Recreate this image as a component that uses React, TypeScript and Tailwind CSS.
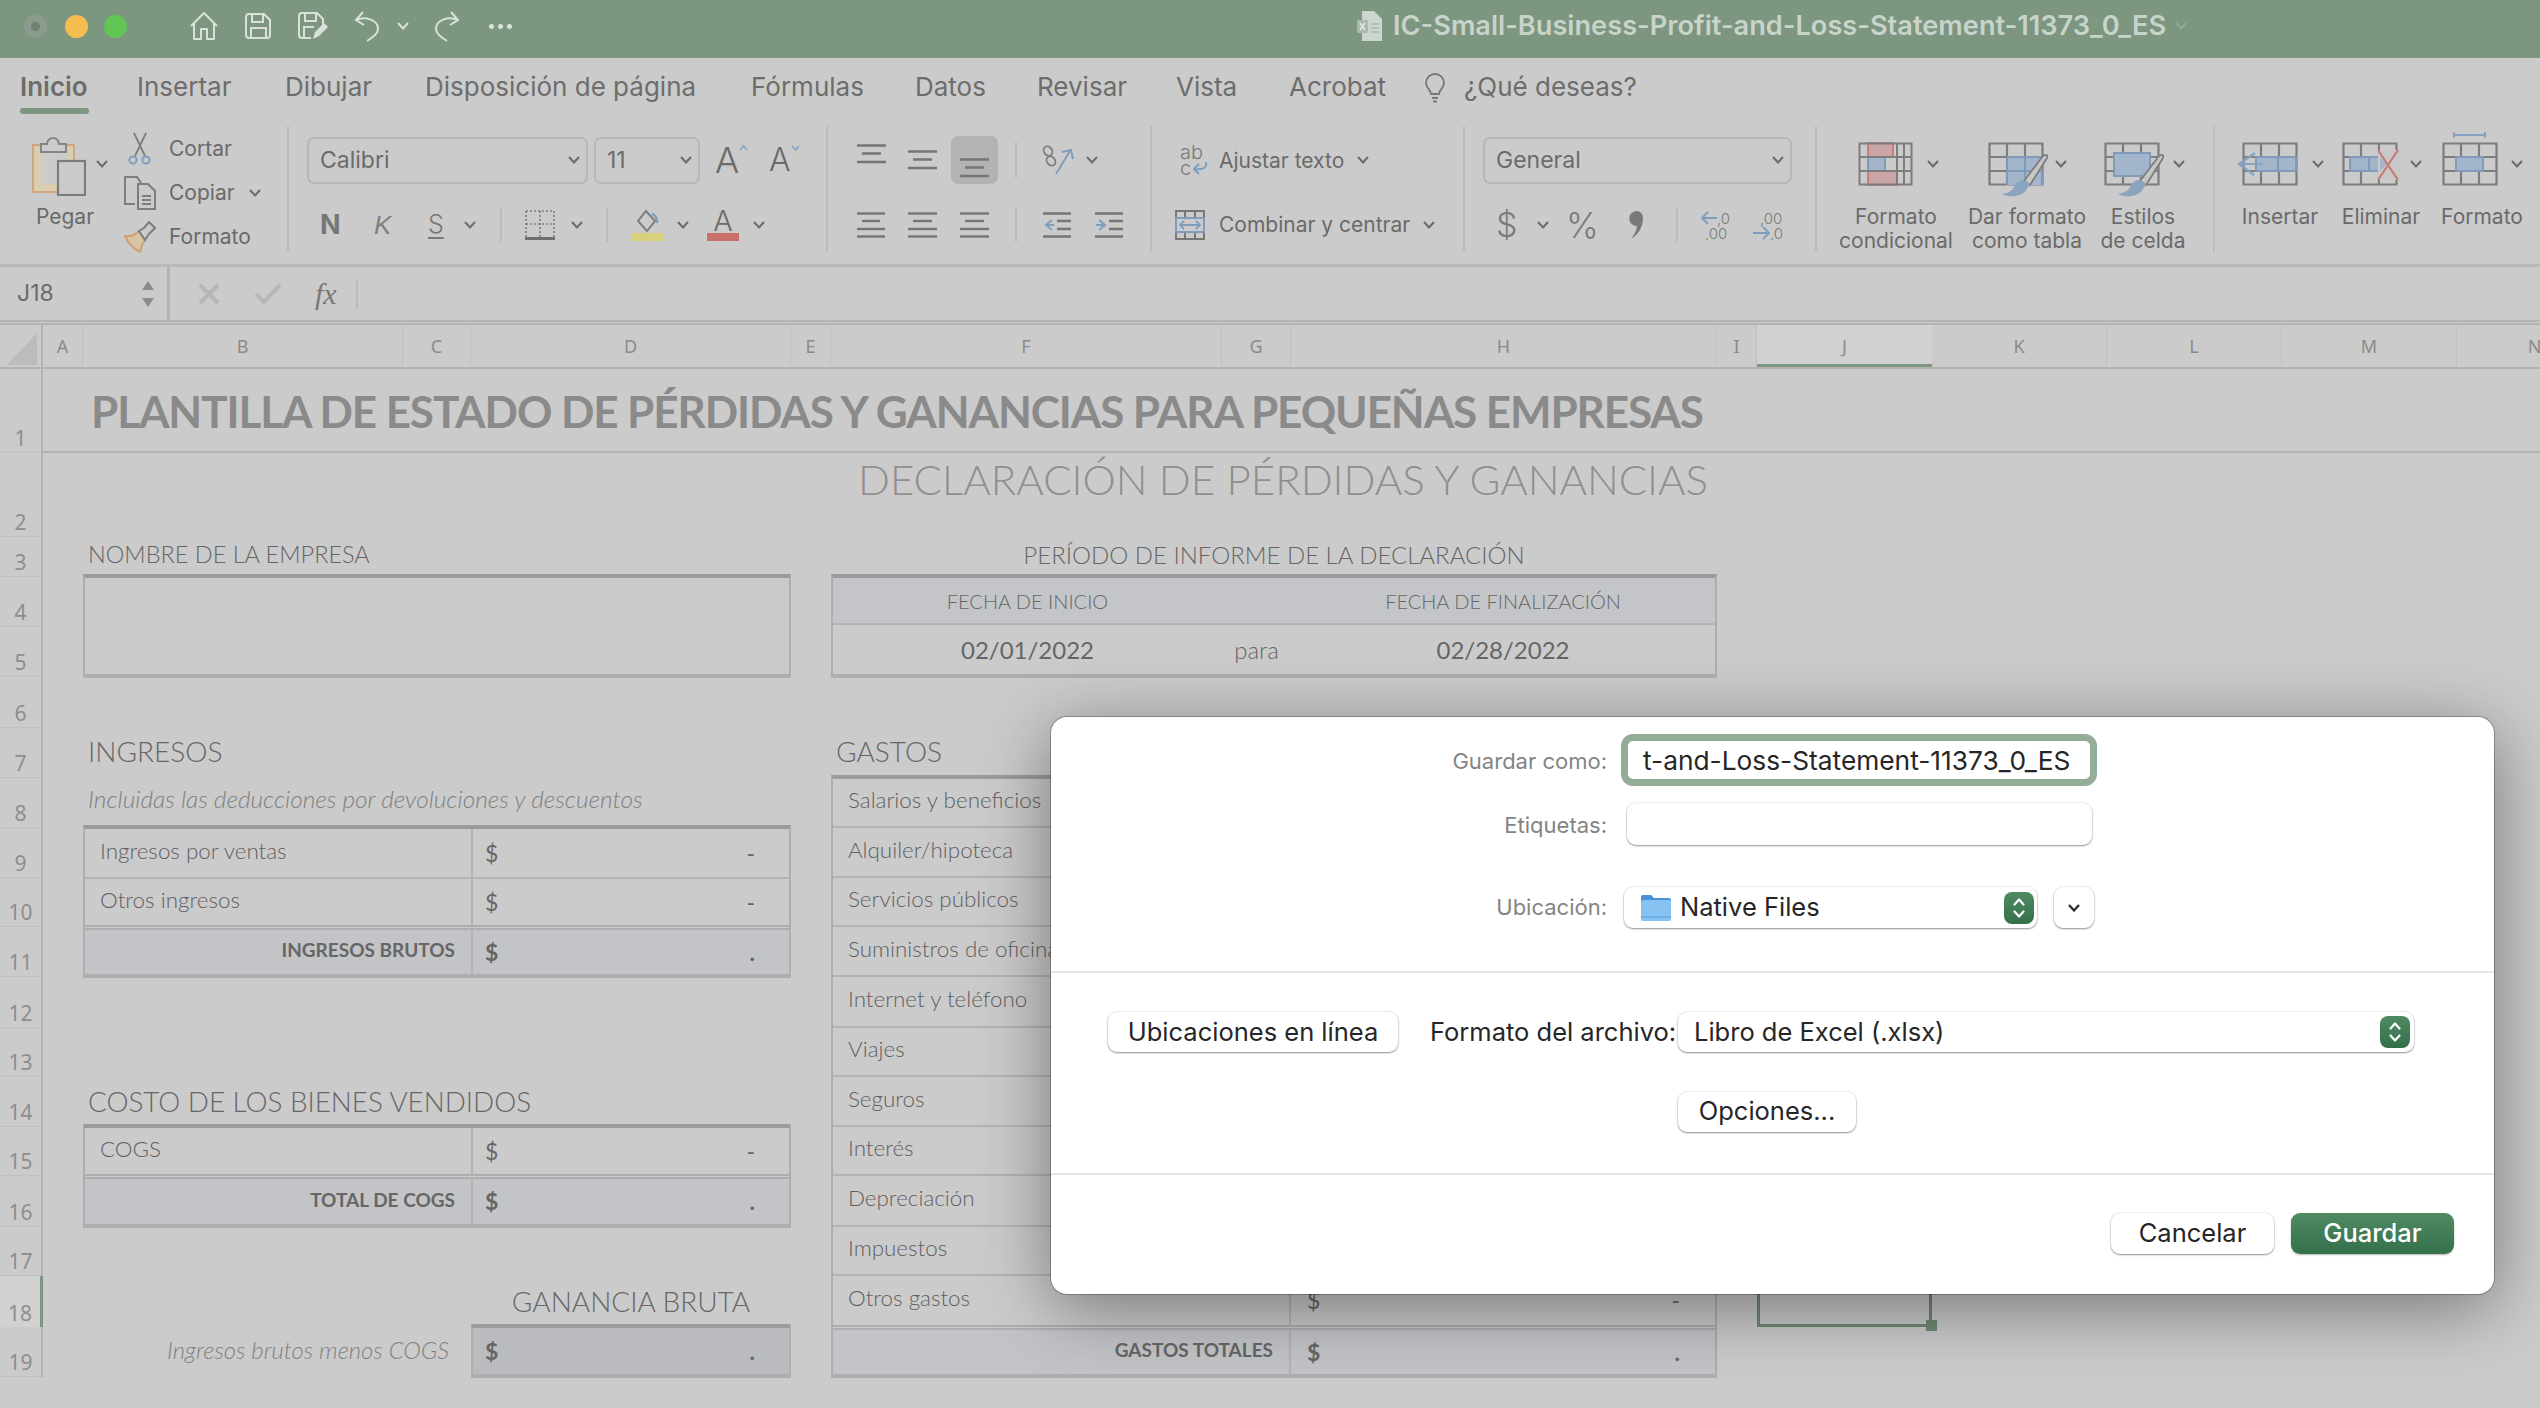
const Chev = ({ className = "" }: { className?: string }) => (
  <svg width="12" height="8" viewBox="0 0 12 8" fill="none" stroke="#6b6b6b" strokeWidth="2" className={`shrink-0 ${className}`}>
    <path d="M1 1l5 5.5L11 1" />
  </svg>
);

const Sep = ({ className = "" }: { className?: string }) => <div className={`w-[2px] shrink-0 bg-[#bcbcbc] ${className}`} />;

const Combo = ({ label, className = "" }: { label: string; className?: string }) => (
  <div className={`flex h-[47px] shrink-0 items-center justify-between rounded-[7px] border-2 border-[#b8b8b8] bg-[#cbcbcb] pl-[11px] pr-[6px] text-[23px] text-[#6a6a6a] ${className}`}>
    <span>{label}</span>
    <Chev />
  </div>
);

// horizontal line icons of the alignment group
const Lines = ({ w, a, b, c }: { w: number; a: number; b: number; c: number }) => (
  <svg width={w} height="26" viewBox={`0 0 ${w} 26`} stroke="#767676" strokeWidth="2.4" className="shrink-0">
    <path d={`M${(w - a) / 2} 1.5h${a}`} />
    <path d={`M${(w - b) / 2} 9h${b}`} />
    <path d={`M${(w - c) / 2} 17h${c}`} />
    <path d={`M${(w - a) / 2} 24.5h${a}`} />
  </svg>
);

const VAlign = ({ y }: { y: number }) => (
  <svg width="29" height="20" viewBox="0 0 29 20" stroke="#767676" strokeWidth="2.4" className="shrink-0" style={{ marginTop: y }}>
    <path d="M0 1.5h29M5 9.5h19M0 18h29" />
  </svg>
);

const Grid = () => (
  <path d="M1.5 1.5h53v41h-53zM19 1.5v41M37 1.5v41M1.5 15h53M1.5 29h53" fill="none" stroke="#7d7d7d" strokeWidth="2.2" />
);

const Brush = () => (
  <g>
    <path d="M55 14c3-2 5-1 4 2L42 43l-6-4z" fill="#c6c6c6" stroke="#7d7d7d" strokeWidth="1.8" />
    <path d="M35 38c-4 0-7 3-9 7-2 4-6 6-12 7 7 4 21 3 25-5 1-2 2-3 3-5z" fill="#8ba4c0" />
  </g>
);

const CondIcon = () => (
  <svg width="55" height="44" viewBox="0 0 55 44" className="shrink-0 overflow-visible">
    <rect x="10" y="1" width="25" height="14" fill="#cba4a8" stroke="#c77d78" strokeWidth="2" />
    <rect x="10" y="15" width="17" height="14" fill="#a3b5ca" stroke="#7f9bb9" strokeWidth="2" />
    <rect x="10" y="29" width="29" height="14" fill="#cba4a8" stroke="#c77d78" strokeWidth="2" />
    <path d="M1.5 1.5h52v41h-52zM1.5 15h52M1.5 29h52M39 1.5v41M46 1.5v41" fill="none" stroke="#7d7d7d" strokeWidth="2" />
  </svg>
);

const TableIcon = () => (
  <svg width="55" height="44" viewBox="0 0 55 44" className="shrink-0 overflow-visible">
    <Grid />
    <rect x="19" y="15" width="35" height="28" fill="#a3b5ca" />
    <path d="M19 15h35M19 15v28M37 15v28M19 29h35M54 29v14" fill="none" stroke="#7f9bb9" strokeWidth="2" />
    <Brush />
  </svg>
);

const StylesIcon = () => (
  <svg width="55" height="44" viewBox="0 0 55 44" className="shrink-0 overflow-visible">
    <Grid />
    <rect x="10" y="11" width="36" height="23" fill="#a3b5ca" stroke="#7f9bb9" strokeWidth="2" />
    <Brush />
  </svg>
);

const InsertIcon = () => (
  <svg width="55" height="44" viewBox="0 0 55 44" className="shrink-0 overflow-visible">
    <Grid />
    <rect x="14" y="15" width="40" height="14" fill="#a3b5ca" stroke="#7f9bb9" strokeWidth="2" />
    <path d="M36 15v14" stroke="#7f9bb9" strokeWidth="2" />
    <path d="M13 11L-3 22l15 11M-3 22h24" fill="none" stroke="#86a4c2" strokeWidth="2.2" />
  </svg>
);

const DeleteIcon = () => (
  <svg width="55" height="44" viewBox="0 0 55 44" className="shrink-0 overflow-visible">
    <Grid />
    <rect x="8" y="15" width="30" height="14" fill="#a3b5ca" stroke="#7f9bb9" strokeWidth="2" />
    <path d="M27 15v14" stroke="#7f9bb9" strokeWidth="2" />
    <rect x="36" y="8" width="22" height="30" fill="#c8c8c8" />
    <path d="M38 15l7 7-7 7z" fill="#a3b5ca" />
    <path d="M36 8l20 30M56 8L36 38" stroke="#c97a74" strokeWidth="2.2" />
  </svg>
);

const FormatIcon = () => (
  <svg width="55" height="44" viewBox="0 0 55 44" className="shrink-0 overflow-visible">
    <Grid />
    <rect x="14" y="15" width="27" height="14" fill="#a3b5ca" stroke="#7f9bb9" strokeWidth="2" />
    <path d="M12-10v6M43-10v6M12-7h31" fill="none" stroke="#86a4c2" strokeWidth="2" />
  </svg>
);

const Stepper = ({ className = "" }: { className?: string }) => (
  <div className={`flex h-[32px] w-[30px] shrink-0 items-center justify-center rounded-[8px] bg-gradient-to-b from-[#4f8a62] to-[#33704a] ${className}`}>
    <svg width="14" height="24" viewBox="0 0 14 24" fill="none" stroke="#fff" strokeWidth="2.2" strokeLinecap="round" strokeLinejoin="round">
      <path d="M2.5 8.5L7 3.5l4.5 5M2.5 15.5l4.5 5 4.5-5" />
    </svg>
  </div>
);

const tabs = [
  { label: "Insertar", w: "w-[148px]" },
  { label: "Dibujar", w: "w-[140px]" },
  { label: "Disposición de página", w: "w-[326px]" },
  { label: "Fórmulas", w: "w-[164px]" },
  { label: "Datos", w: "w-[122px]" },
  { label: "Revisar", w: "w-[139px]" },
  { label: "Vista", w: "w-[113px]" },
  { label: "Acrobat", w: "w-[135px]" },
];

const colHeads = [
  { l: "A", w: "w-[40px]" },
  { l: "B", w: "w-[320px]" },
  { l: "C", w: "w-[68px]" },
  { l: "D", w: "w-[320px]" },
  { l: "E", w: "w-[40px]" },
  { l: "F", w: "w-[391px]" },
  { l: "G", w: "w-[69px]" },
  { l: "H", w: "w-[426px]" },
  { l: "I", w: "w-[40px]" },
  { l: "J", w: "w-[175px]" },
  { l: "K", w: "w-[175px]" },
  { l: "L", w: "w-[175px]" },
  { l: "M", w: "w-[175px]" },
  { l: "N", w: "w-[156px]" },
];

const rowHeads = [
  { n: 1, h: "h-[84px]" },
  { n: 2, h: "h-[84px]" },
  { n: 3, h: "h-[40px]" },
  { n: 4, h: "h-[50px]" },
  { n: 5, h: "h-[50px]" },
  { n: 6, h: "h-[51px]" },
  { n: 7, h: "h-[50px]" },
  { n: 8, h: "h-[50px]" },
  { n: 9, h: "h-[50px]" },
  { n: 10, h: "h-[49px]" },
  { n: 11, h: "h-[50px]" },
  { n: 12, h: "h-[51px]" },
  { n: 13, h: "h-[49px]" },
  { n: 14, h: "h-[50px]" },
  { n: 15, h: "h-[49px]" },
  { n: 16, h: "h-[51px]" },
  { n: 17, h: "h-[49px]" },
  { n: 18, h: "h-[51px]" },
  { n: 19, h: "h-[50px]" },
];

const gastos = [
  { l: "Salarios y beneficios", h: "h-[47px]" },
  { l: "Alquiler/hipoteca", h: "h-[48px]" },
  { l: "Servicios públicos", h: "h-[47px]" },
  { l: "Suministros de oficina", h: "h-[48px]" },
  { l: "Internet y teléfono", h: "h-[49px]" },
  { l: "Viajes", h: "h-[47px]" },
  { l: "Seguros", h: "h-[48px]" },
  { l: "Interés", h: "h-[47px]" },
  { l: "Depreciación", h: "h-[49px]" },
  { l: "Impuestos", h: "h-[47px]" },
];

const barDark = "border-t-4 border-t-[#9b9b9b]";
const barSoft = "border-b-4 border-b-[#aeaeae]";
const labelCell = "flex items-center border-r-2 border-[#b3b3b3] pb-[5px] text-[22.4px] font-light text-[#5f5f5f]";
const totalCell = "flex w-[388px] items-center justify-end border-r-2 border-[#b3b3b3] pb-[3px] pr-[16px] text-[19px] font-bold text-[#666]";
const control = "bg-white shadow-[0_1px_2px_rgba(0,0,0,0.4),0_0_0_1px_rgba(0,0,0,0.05)]";

const Money = ({ bold = false, pl = "pl-[12px]", pr = "pr-[34px]" }: { bold?: boolean; pl?: string; pr?: string }) => (
  <div className={`flex flex-1 items-center justify-between text-[23px] text-[#666] ${pl} ${pr} ${bold ? "font-bold" : "font-normal"}`}>
    <span>$</span>
    <span>{bold ? "." : "-"}</span>
  </div>
);

export default function App() {
  return (
    <div className="relative h-[1408px] w-[2540px] overflow-hidden bg-[#cbcbcb] font-[Inter,sans-serif]">
      {/* title bar */}
      <div className="flex h-[58px] items-center bg-[#7c9680] pb-[6px]">
        <div className="ml-[24px] flex h-[23px] w-[23px] items-center justify-center rounded-full bg-[#8b9c8e]">
          <div className="h-[9px] w-[9px] rounded-full bg-[#6f8273]" />
        </div>
        <div className="ml-[18px] h-[23px] w-[23px] rounded-full bg-[#f5bd4f]" />
        <div className="ml-[16px] h-[23px] w-[23px] rounded-full bg-[#61c554]" />
        <svg width="30" height="30" viewBox="0 0 30 30" fill="none" stroke="#d9e1da" strokeWidth="2" className="ml-[62px]">
          <path d="M2 15L15 2l13 13M5 12v16h7V18h6v10h7V12" strokeLinejoin="round" />
        </svg>
        <svg width="28" height="28" viewBox="0 0 28 28" fill="none" stroke="#d9e1da" strokeWidth="2" className="ml-[25px]">
          <path d="M2 5a3 3 0 013-3h15l6 6v15a3 3 0 01-3 3H5a3 3 0 01-3-3z" />
          <path d="M8 2v8h11V2M7 26V16h15v10" />
        </svg>
        <svg width="32" height="30" viewBox="0 0 32 30" fill="none" stroke="#d9e1da" strokeWidth="2" className="ml-[25px]">
          <path d="M14 27H5a3 3 0 01-3-3V5a3 3 0 013-3h15l6 6v6" />
          <path d="M8 2v8h11V2M7 26V16h10" />
          <path d="M16 28l2-7L27 12l4 4-9 9z" fill="#d9e1da" stroke="none" />
        </svg>
        <svg width="28" height="32" viewBox="0 0 28 32" fill="none" stroke="#d9e1da" strokeWidth="2" className="ml-[24px]">
          <path d="M10 2L3 10l8 5M3 10c10-4 22 0 22 9 0 5-6 9-11 12" />
        </svg>
        <svg width="12" height="8" viewBox="0 0 12 8" fill="none" stroke="#d9e1da" strokeWidth="2" className="ml-[16px]">
          <path d="M1 1l5 5.5L11 1" />
        </svg>
        <svg width="28" height="32" viewBox="0 0 28 32" fill="none" stroke="#d9e1da" strokeWidth="2" className="ml-[24px]">
          <path d="M18 2l7 8-8 5M25 10C15 6 3 10 3 19c0 5 6 9 11 12" />
        </svg>
        <div className="ml-[28px] flex gap-[4px]">
          <div className="h-[5px] w-[5px] rounded-full bg-[#d9e1da]" />
          <div className="h-[5px] w-[5px] rounded-full bg-[#d9e1da]" />
          <div className="h-[5px] w-[5px] rounded-full bg-[#d9e1da]" />
        </div>
        <svg width="25" height="30" viewBox="0 0 25 30" className="ml-[845px]">
          <path d="M5 0h12l8 8v22H5z" fill="#ccd6ce" />
          <rect x="0" y="9" width="11" height="13" rx="1" fill="#a9b9ac" />
          <path d="M3 12l5 7M8 12l-5 7" stroke="#e6ece7" strokeWidth="1.4" />
          <path d="M14 13h8M14 17h8M14 21h8" stroke="#a9b9ac" strokeWidth="1.6" />
        </svg>
        <span className="ml-[11px] w-[772px] whitespace-nowrap text-[27.2px] font-semibold text-[#c8d3ca]">
          IC-Small-Business-Profit-and-Loss-Statement-11373_0_ES
        </span>
        <svg width="12" height="8" viewBox="0 0 12 8" fill="none" stroke="#93a996" strokeWidth="2" className="ml-[10px]">
          <path d="M1 1l5 5.5L11 1" />
        </svg>
      </div>

      {/* tabs */}
      <div className="flex h-[56px] items-start pl-[20px] pt-[13px] text-[26px] leading-[32px] text-[#6d6d6d]">
        <div className="flex w-[117px] flex-col">
          <span className="w-[69px] font-semibold">Inicio</span>
          <div className="mt-[5px] h-[6px] w-[69px] rounded-[3px] bg-[#7c9680]" />
        </div>
        {tabs.map((t) => (
          <span key={t.label} className={`whitespace-nowrap ${t.w}`}>
            {t.label}
          </span>
        ))}
        <svg width="22" height="30" viewBox="0 0 22 30" fill="none" stroke="#777" strokeWidth="1.8" className="mr-[18px] mt-[2px] shrink-0">
          <path d="M7 21c0-4-5-6-5-11a9 9 0 0118 0c0 5-5 7-5 11z" />
          <path d="M8 25h6M9 28.500h4" />
        </svg>
        <span className="whitespace-nowrap">¿Qué deseas?</span>
      </div>

      {/* ribbon */}
      <div className="flex h-[153px] border-b-[3px] border-[#b9b9b9] text-[21px] text-[#6a6a6a]">
        {/* clipboard */}
        <div className="flex w-[287px] shrink-0">
          <div className="flex w-[124px] flex-col">
            <div className="mt-[22px] flex items-start">
              <svg width="54" height="60" viewBox="0 0 54 60" className="ml-[32px] shrink-0">
                <rect x="1" y="9" width="41" height="47" fill="#d8cdb0" stroke="#d0a67e" strokeWidth="2" />
                <rect x="9" y="16" width="26" height="32" fill="#cbcbcb" />
                <path d="M9 16V8h6a6 6 0 0112 0h7v8z" fill="#cbcbcb" stroke="#858585" strokeWidth="2" />
                <rect x="26" y="25" width="27" height="34" fill="#cbcbcb" stroke="#7b7b7b" strokeWidth="2.2" />
              </svg>
              <Chev className="ml-[10px] mt-[24px]" />
            </div>
            <span className="mt-[9px] pl-[6px] text-center leading-[24px]">Pegar</span>
          </div>
          <div className="mt-[13px] flex flex-col">
            <div className="flex h-[44px] items-center">
              <svg width="32" height="34" viewBox="0 0 32 34" fill="none" className="mr-[13px] shrink-0">
                <path d="M10 1l11 23M22 1L11 24" stroke="#7d7d7d" strokeWidth="1.8" />
                <circle cx="9" cy="28" r="3.600" stroke="#7f9ebd" strokeWidth="2" />
                <circle cx="22" cy="28" r="3.600" stroke="#7f9ebd" strokeWidth="2" />
              </svg>
              <span>Cortar</span>
            </div>
            <div className="flex h-[44px] items-center">
              <svg width="32" height="34" viewBox="0 0 32 34" fill="none" stroke="#7d7d7d" strokeWidth="2" className="mr-[13px] shrink-0">
                <path d="M11 28H1V1h12l4 6" />
                <path d="M14 8h10l7 7v18H14zM18 20h9M18 24h9M18 28h9" />
              </svg>
              <span>Copiar</span>
              <Chev className="ml-[14px]" />
            </div>
            <div className="flex h-[44px] items-center">
              <svg width="32" height="32" viewBox="0 0 32 32" fill="none" className="mr-[13px] shrink-0">
                <path d="M1 15c5 1 10-1 14-5l6 9c-3 4-4 8-5 12C10 28 4 22 1 15z" fill="#d6c6a4" stroke="#cf9f78" strokeWidth="2" />
                <path d="M15 10l5-3 5-6 6 6-6 6-4 6z" fill="#cbcbcb" stroke="#7d7d7d" strokeWidth="2" />
              </svg>
              <span>Formato</span>
            </div>
          </div>
        </div>
        <Sep className="my-[12px]" />

        {/* font */}
        <div className="flex w-[537px] shrink-0 flex-col pt-[22px]">
          <div className="flex h-[48px] items-center">
            <Combo label="Calibri" className="ml-[18px] w-[281px]" />
            <Combo label="11" className="ml-[6px] w-[106px]" />
            <div className="ml-[15px] flex w-[30px] shrink-0 items-start">
              <span className="text-[36px] font-light leading-[36px]">A</span>
              <svg width="9" height="6" viewBox="0 0 9 6" fill="none" stroke="#86a4c2" strokeWidth="1.6" className="mt-[3px] shrink-0">
                <path d="M1 5l3.500-4L8 5" />
              </svg>
            </div>
            <div className="ml-[24px] flex w-[28px] shrink-0 items-start">
              <span className="text-[32px] font-light leading-[36px]">A</span>
              <svg width="9" height="6" viewBox="0 0 9 6" fill="none" stroke="#86a4c2" strokeWidth="1.6" className="mt-[3px] shrink-0">
                <path d="M1 1l3.500 4L8 1" />
              </svg>
            </div>
          </div>
          <div className="mt-[25px] flex h-[32px] items-center">
            <span className="ml-[31px] w-[20px] text-[27px] font-bold text-[#777]">N</span>
            <span className="ml-[34px] w-[18px] font-['Liberation_Sans',sans-serif] text-[26px] font-light italic text-[#808080]">K</span>
            <span className="ml-[36px] w-[16px] text-[25px] font-light text-[#777] underline underline-offset-4">S</span>
            <Chev className="ml-[20px]" />
            <Sep className="ml-[24px] h-[34px]" />
            <svg width="30" height="30" viewBox="0 0 30 30" fill="none" className="ml-[23px] shrink-0">
              <path d="M1 1h28M1 1v26M29 1v26M15 1v26M1 14h28" stroke="#7d7d7d" strokeWidth="1.6" strokeDasharray="2 2" />
              <path d="M0 28.500h30" stroke="#6f6f6f" strokeWidth="3" />
            </svg>
            <Chev className="ml-[16px]" />
            <Sep className="ml-[23px] h-[34px]" />
            <div className="ml-[23px] flex w-[33px] shrink-0 flex-col items-center">
              <svg width="26" height="24" viewBox="0 0 26 24" fill="none">
                <path d="M11 2l9 10-8 10-9-10z" stroke="#7d7d7d" strokeWidth="2" />
                <path d="M17 5c4 1 5 4 5 9" stroke="#7f9ebd" strokeWidth="2.4" />
              </svg>
              <div className="h-[8px] w-[33px] bg-[#d8d17c]" />
            </div>
            <Chev className="ml-[13px]" />
            <div className="ml-[18px] flex w-[32px] shrink-0 flex-col items-center">
              <span className="h-[24px] text-[29px] font-light leading-[24px]">A</span>
              <div className="h-[8px] w-[32px] bg-[#c9706a]" />
            </div>
            <Chev className="ml-[14px]" />
          </div>
        </div>
        <Sep className="my-[12px]" />

        {/* alignment */}
        <div className="flex w-[322px] shrink-0 flex-col pt-[22px]">
          <div className="flex h-[48px] items-start">
            <div className="ml-[29px] w-[28px]">
              <VAlign y={8} />
            </div>
            <div className="ml-[23px] w-[29px]">
              <VAlign y={14} />
            </div>
            <div className="ml-[14px] flex h-[48px] w-[47px] shrink-0 justify-center rounded-[7px] bg-[#b3b3b3]">
              <VAlign y={22} />
            </div>
            <Sep className="ml-[17px] mt-[6px] h-[36px]" />
            <svg width="35" height="30" viewBox="0 0 35 30" fill="none" className="ml-[23px] mt-[9px] shrink-0">
              <ellipse cx="8" cy="6" rx="4" ry="5" transform="rotate(-40 8 6)" stroke="#7d7d7d" strokeWidth="1.8" />
              <ellipse cx="11" cy="16" rx="4" ry="5" transform="rotate(-40 11 16)" stroke="#7d7d7d" strokeWidth="1.8" />
              <path d="M16 29L30 6M22 7l9-2 2 9" stroke="#7f9ebd" strokeWidth="2" />
            </svg>
            <Chev className="ml-[11px] mt-[20px]" />
          </div>
          <div className="mt-[25px] flex h-[32px] items-center">
            <div className="ml-[29px] w-[28px]">
              <Lines w={28} a={28} b={18} c={28} />
            </div>
            <div className="ml-[23px] w-[29px]">
              <Lines w={29} a={29} b={19} c={29} />
            </div>
            <div className="ml-[23px] w-[29px]">
              <Lines w={29} a={29} b={19} c={29} />
            </div>
            <Sep className="ml-[26px] h-[34px]" />
            <svg width="28" height="26" viewBox="0 0 28 26" fill="none" className="ml-[26px] shrink-0">
              <path d="M0 1.500h28M14 9h14M14 17h14M0 24.500h28" stroke="#767676" strokeWidth="2.4" />
              <path d="M9 8L3 13l6 5M3 13h8" stroke="#7f9ebd" strokeWidth="2" />
            </svg>
            <svg width="28" height="26" viewBox="0 0 28 26" fill="none" className="ml-[24px] shrink-0">
              <path d="M0 1.500h28M14 9h14M14 17h14M0 24.500h28" stroke="#767676" strokeWidth="2.4" />
              <path d="M4 8l6 5-6 5M10 13H1" stroke="#7f9ebd" strokeWidth="2" />
            </svg>
          </div>
        </div>
        <Sep className="my-[12px]" />

        {/* wrap and merge */}
        <div className="flex w-[311px] shrink-0 flex-col pt-[22px]">
          <div className="flex h-[48px] items-center">
            <svg width="30" height="32" viewBox="0 0 30 32" className="ml-[28px] mt-[2px] mr-[-3px] shrink-0" fontFamily="Inter" fontSize="20" fontWeight="300" fill="#7a7a7a">
              <text x="0" y="14">ab</text>
              <text x="0" y="30">c</text>
              <path d="M26 17c1 6-3 8-11 7M19 19l-5 5 5 5" fill="none" stroke="#7f9ebd" strokeWidth="2" />
            </svg>
            <span className="ml-[12px] mt-[2px] w-[126px] whitespace-nowrap">Ajustar texto</span>
            <Chev className="ml-[12px]" />
          </div>
          <div className="mt-[25px] flex h-[32px] items-center">
            <svg width="30" height="30" viewBox="0 0 30 30" fill="none" className="ml-[23px] shrink-0">
              <path d="M1 1h28v28H1zM1 8h28M1 22h28M10 1v7M20 1v7M10 22v7M20 22v7" stroke="#777" strokeWidth="2" />
              <rect x="1" y="8" width="28" height="14" fill="#cbcbcb" stroke="#7f9ebd" strokeWidth="2" />
              <path d="M5 15h20M9 11l-4 4 4 4M21 11l4 4-4 4" stroke="#7f9ebd" strokeWidth="1.8" />
            </svg>
            <span className="ml-[14px] w-[192px] whitespace-nowrap">Combinar y centrar</span>
            <Chev className="ml-[12px]" />
          </div>
        </div>
        <Sep className="my-[12px]" />

        {/* number */}
        <div className="flex w-[350px] shrink-0 flex-col pt-[22px]">
          <div className="flex h-[48px] items-center">
            <Combo label="General" className="ml-[18px] w-[309px]" />
          </div>
          <div className="mt-[25px] flex h-[32px] items-center text-[#7a7a7a]">
            <span className="ml-[31px] w-[17px] text-[34px] font-light leading-[32px]">$</span>
            <Chev className="ml-[24px]" />
            <span className="ml-[17px] w-[32px] whitespace-nowrap text-[35px] font-light leading-[32px]">%</span>
            <svg width="15" height="30" viewBox="0 0 15 30" fill="#7a7a7a" className="ml-[31px] shrink-0">
              <path d="M7.500 1a6.500 6.500 0 016.500 7c0 9-5 17-12 21 3-4 5.500-8 6-13A7.500 7.500 0 017.500 1z" />
            </svg>
            <Sep className="ml-[32px] h-[34px]" />
            <svg width="32" height="30" viewBox="0 0 32 30" className="-mr-[1px] ml-[22px] shrink-0" fontFamily="Inter" fontSize="15" fontWeight="300" fill="#7a7a7a">
              <path d="M17 8H2M8 2L2 8l6 6" fill="none" stroke="#7f9ebd" strokeWidth="2" />
              <text x="17" y="14">,0</text>
              <text x="5" y="29">,00</text>
            </svg>
            <svg width="32" height="30" viewBox="0 0 32 30" className="-mr-[2px] ml-[22px] shrink-0" fontFamily="Inter" fontSize="15" fontWeight="300" fill="#7a7a7a">
              <text x="7" y="14">,00</text>
              <path d="M0 23h15M10 17l6 6-6 6" fill="none" stroke="#7f9ebd" strokeWidth="2" />
              <text x="17" y="29">,0</text>
            </svg>
          </div>
        </div>
        <Sep className="my-[12px]" />

        {/* styles */}
        <div className="flex w-[396px] shrink-0 flex-col pt-[28px]">
          <div className="flex h-[44px] items-start">
            <div className="ml-[41px]">
              <CondIcon />
            </div>
            <Chev className="ml-[14px] mt-[18px]" />
            <div className="ml-[49px]">
              <TableIcon />
            </div>
            <Chev className="ml-[12px] mt-[18px]" />
            <div className="ml-[37px]">
              <StylesIcon />
            </div>
            <Chev className="ml-[14px] mt-[18px]" />
          </div>
          <div className="mt-[19px] flex whitespace-nowrap text-center leading-[24px]">
            <span className="ml-[14px] w-[130px]">
              Formato
              <br />
              condicional
            </span>
            <span className="ml-[1px] w-[130px]">
              Dar formato
              <br />
              como tabla
            </span>
            <span className="ml-[1px] w-[100px]">
              Estilos
              <br />
              de celda
            </span>
          </div>
        </div>
        <Sep className="my-[12px]" />

        {/* cells */}
        <div className="flex flex-1 flex-col pt-[28px]">
          <div className="flex h-[44px] items-start">
            <div className="ml-[27px]">
              <InsertIcon />
            </div>
            <Chev className="ml-[15px] mt-[18px]" />
            <div className="ml-[18px]">
              <DeleteIcon />
            </div>
            <Chev className="ml-[13px] mt-[18px]" />
            <div className="ml-[20px]">
              <FormatIcon />
            </div>
            <Chev className="ml-[14px] mt-[18px]" />
          </div>
          <div className="mt-[19px] flex text-center leading-[24px]">
            <span className="ml-[15px] w-[100px]">Insertar</span>
            <span className="ml-[1px] w-[100px]">Eliminar</span>
            <span className="ml-[1px] w-[100px]">Formato</span>
          </div>
        </div>
      </div>

      {/* formula bar */}
      <div className="flex h-[58px] items-center border-b-[5px] border-double border-[#b3b3b3] text-[#6a6a6a]">
        <div className="flex h-full w-[170px] shrink-0 items-center border-r-[3px] border-[#b3b3b3] pl-[17px] text-[23px]">
          <span className="w-[125px]">J18</span>
          <div className="flex flex-col gap-[8px]">
            <div className="h-0 w-0 border-x-[6px] border-b-[9px] border-x-transparent border-b-[#8b8b8b]" />
            <div className="h-0 w-0 border-x-[6px] border-t-[9px] border-x-transparent border-t-[#8b8b8b]" />
          </div>
        </div>
        <svg width="22" height="22" viewBox="0 0 22 22" fill="none" stroke="#b6b6b6" strokeWidth="4" className="ml-[28px] shrink-0">
          <path d="M2 2l18 18M20 2L2 20" />
        </svg>
        <svg width="28" height="22" viewBox="0 0 28 22" fill="none" stroke="#b6b6b6" strokeWidth="4" className="ml-[34px] shrink-0">
          <path d="M2 11l8 8L26 2" />
        </svg>
        <span className="ml-[33px] w-[33px] font-['Liberation_Serif',serif] text-[30px] italic text-[#777]">fx</span>
        <Sep className="ml-[8px] h-[30px]" />
      </div>

      {/* column headers */}
      <div className="flex h-[44px] border-b-2 border-[#b3b3b3] text-center font-['Noto_Sans',sans-serif] text-[18px] leading-[42px] text-[#8a8a8a]">
        <div className="flex w-[43px] shrink-0 items-end justify-end border-r-2 border-[#b3b3b3] pb-[2px] pr-[4px]">
          <div className="h-0 w-0 border-b-[32px] border-l-[30px] border-b-[#bcbcbc] border-l-transparent" />
        </div>
        {colHeads.map((c) => (
          <div
            key={c.l}
            className={`shrink-0 ${c.w} ${c.l === "J" ? "border-b-[3px] border-[#7c9680] bg-[#d1d1d1]" : "border-r border-[#c1c1c1]"}`}
          >
            {c.l}
          </div>
        ))}
      </div>

      {/* sheet */}
      <div className="flex font-[Lato,sans-serif]">
        <div className="flex w-[43px] shrink-0 flex-col border-r-2 border-[#b3b3b3] font-['Noto_Sans',sans-serif] text-[21px] text-[#8e8e8e]">
          {rowHeads.map((r) => (
            <div
              key={r.n}
              className={`flex shrink-0 items-end justify-center leading-[28px] ${r.h} ${
                r.n === 18 ? "-mr-[2px] border-r-[3px] border-[#7c9680] bg-[#d1d1d1]" : "border-b border-[#c1c1c1]"
              }`}
            >
              {r.n}
            </div>
          ))}
        </div>

        <div className="grid w-[2497px] grid-cols-[40px_320px_68px_320px_40px_391px_69px_426px_40px_175px_175px_175px_175px_83px] grid-rows-[84px_84px_40px_50px_50px_51px_50px_50px_50px_49px_50px_51px_49px_50px_49px_51px_49px_51px_50px] text-[#666]">
          <div className="col-span-full col-start-1 row-start-1 flex items-end border-b-2 border-[#b3b3b3] pb-[15px] pl-[48px]">
            <span className="whitespace-nowrap text-[44px] font-bold leading-[50px] tracking-[-1.1px] text-[#8a8a8a]">
              PLANTILLA DE ESTADO DE PÉRDIDAS Y GANANCIAS PARA PEQUEÑAS EMPRESAS
            </span>
          </div>

          <div className="col-span-3 col-start-6 row-start-2 whitespace-nowrap pl-[18px] pt-[2px] text-center text-[42px] font-light leading-[48px] text-[#8f8f8f]">
            DECLARACIÓN DE PÉRDIDAS Y GANANCIAS
          </div>

          <div className="col-span-3 col-start-2 row-start-3 self-center pb-[5px] pl-[5px] text-[23.5px] font-light">NOMBRE DE LA EMPRESA</div>
          <div className="col-span-3 col-start-6 row-start-3 self-center whitespace-nowrap pb-[5px] text-center text-[24px] font-light">
            PERÍODO DE INFORME DE LA DECLARACIÓN
          </div>

          {/* company name box */}
          <div className={`col-span-3 col-start-2 row-span-2 row-start-4 -mt-[3px] h-[104px] border-x-2 border-x-[#aeaeae] bg-[#c9cbca] ${barDark} ${barSoft}`} />

          {/* period box */}
          <div className={`col-span-3 col-start-6 row-span-2 row-start-4 -mt-[3px] flex h-[104px] flex-col border-x-2 border-x-[#aeaeae] ${barDark} ${barSoft}`}>
            <div className="grid h-[47px] grid-cols-[389px_69px_1fr] items-center border-b-2 border-[#b3b3b3] bg-[#c3c5c8] text-center text-[20px] font-light">
              <span className="whitespace-nowrap">FECHA DE INICIO</span>
              <span />
              <span className="whitespace-nowrap">FECHA DE FINALIZACIÓN</span>
            </div>
            <div className="grid flex-1 grid-cols-[389px_69px_1fr] items-center text-center text-[24px]">
              <span>02/01/2022</span>
              <span className="font-light">para</span>
              <span>02/28/2022</span>
            </div>
          </div>

          {/* income */}
          <div className="col-span-3 col-start-2 row-start-7 self-center pb-[4px] pl-[5px] text-[28px] font-light leading-[36px]">INGRESOS</div>
          <div className="col-span-3 col-start-2 row-start-8 whitespace-nowrap pl-[5px] pt-[3px] text-[24.4px] font-light italic text-[#808080]">
            Incluidas las deducciones por devoluciones y descuentos
          </div>
          <div className={`col-span-3 col-start-2 row-span-3 row-start-9 -mt-[3px] flex h-[153px] flex-col self-start border-x-2 border-x-[#aeaeae] ${barDark} ${barSoft}`}>
            <div className="flex h-[50px] border-b-2 border-[#b3b3b3]">
              <div className={`w-[388px] pl-[15px] ${labelCell}`}>Ingresos por ventas</div>
              <Money />
            </div>
            <div className="flex h-[51px] border-b-[5px] border-double border-[#aeaeae]">
              <div className={`w-[388px] pl-[15px] ${labelCell}`}>Otros ingresos</div>
              <Money />
            </div>
            <div className="flex flex-1 bg-[#c2c4c7]">
              <div className={totalCell}>INGRESOS BRUTOS</div>
              <Money bold />
            </div>
          </div>

          {/* cost of goods */}
          <div className="col-span-3 col-start-2 row-start-14 self-center whitespace-nowrap pl-[5px] text-[27.8px] font-light leading-[36px]">COSTO DE LOS BIENES VENDIDOS</div>
          <div className={`col-span-3 col-start-2 row-span-2 row-start-15 -mt-[3px] flex h-[104px] flex-col self-start border-x-2 border-x-[#aeaeae] ${barDark} ${barSoft}`}>
            <div className="flex h-[51px] border-b-[5px] border-double border-[#aeaeae]">
              <div className={`w-[388px] pl-[15px] ${labelCell}`}>COGS</div>
              <Money />
            </div>
            <div className="flex flex-1 bg-[#c2c4c7]">
              <div className={totalCell}>TOTAL DE COGS</div>
              <Money bold />
            </div>
          </div>

          {/* gross profit */}
          <div className="col-start-4 row-start-18 self-end whitespace-nowrap pb-[8px] text-center text-[28px] font-light leading-[36px]">GANANCIA BRUTA</div>
          <div className="col-span-2 col-start-2 row-start-19 self-center whitespace-nowrap pb-[3px] pr-[22px] text-right text-[23.8px] font-light italic text-[#808080]">Ingresos brutos menos COGS</div>
          <div className={`col-start-4 row-start-19 -mt-[3px] flex h-[54px] self-start border-x-2 border-x-[#aeaeae] bg-[#b9bbbe] ${barDark} ${barSoft}`}>
            <Money bold />
          </div>

          {/* expenses */}
          <div className="col-span-3 col-start-6 row-start-7 self-center pb-[4px] pl-[5px] text-[28px] font-light leading-[36px]">GASTOS</div>
          <div className={`col-span-3 col-start-6 row-span-12 row-start-8 -mt-[3px] flex h-[603px] flex-col self-start border-x-2 border-x-[#aeaeae] ${barDark} ${barSoft}`}>
            {gastos.map((g) => (
              <div key={g.l} className={`box-content flex shrink-0 border-b-2 border-[#b3b3b3] ${g.h}`}>
                <div className={`w-[458px] pl-[15px] ${labelCell}`}>{g.l}</div>
              </div>
            ))}
            <div className="flex h-[54px] shrink-0 border-b-[5px] border-double border-[#aeaeae]">
              <div className={`w-[458px] pl-[15px] ${labelCell}`}>Otros gastos</div>
              <Money pl="pl-[16px]" pr="pr-[35px]" />
            </div>
            <div className="flex flex-1 bg-[#c2c4c7]">
              <div className="flex w-[458px] items-center justify-end border-r-2 border-[#b3b3b3] pb-[3px] pr-[16px] text-[19px] font-bold text-[#666]">GASTOS TOTALES</div>
              <Money bold pl="pl-[16px]" pr="pr-[35px]" />
            </div>
          </div>

          {/* selected cell */}
          <div className="relative col-start-10 row-start-18 border-[3px] border-[#6f8a74]">
            <div className="absolute -bottom-[7px] -right-[8px] h-[11px] w-[11px] bg-[#6f8a74]" />
          </div>
        </div>
      </div>

      {/* save dialog */}
      <div className="absolute left-[1051px] top-[717px] flex h-[577px] w-[1443px] flex-col rounded-[16px] bg-white text-[25.5px] text-[#262626] shadow-[0_14px_70px_rgba(0,0,0,0.42),0_0_0_1px_rgba(0,0,0,0.25)]">
        <div className="h-[256px] shrink-0 border-b-2 border-[#e6e6e6] pt-[17px]">
          <div className="flex h-[52px] items-center">
            <span className="w-[556px] pt-[2px] text-right text-[22px] text-[#848484]">Guardar como:</span>
            <div className="ml-[14px] flex h-[52px] w-[476px] items-center rounded-[12px] border-[7px] border-[#93ad96] bg-white pl-[15px]">
              <span className="whitespace-nowrap pt-[1px] text-[26.3px] leading-[30px]">t-and-Loss-Statement-11373_0_ES</span>
            </div>
          </div>
          <div className="mt-[17px] flex h-[42px] items-center">
            <span className="w-[556px] pt-[2px] text-right text-[22px] text-[#848484]">Etiquetas:</span>
            <div className={`ml-[20px] h-[42px] w-[465px] rounded-[9px] ${control}`} />
          </div>
          <div className="mt-[42px] flex h-[41px] items-center">
            <span className="w-[556px] text-right text-[22px] text-[#848484]">Ubicación:</span>
            <div className={`ml-[17px] flex h-[41px] w-[413px] items-center rounded-[9px] pl-[17px] pr-[3px] ${control}`}>
              <svg width="30" height="27" viewBox="0 0 30 27" className="shrink-0">
                <path d="M0 3a2 2 0 012-2h8l3 3h15a2 2 0 012 2v4H0z" fill="#4a90d4" />
                <rect x="0" y="6" width="30" height="21" rx="2" fill="#86c2f2" />
                <rect x="0" y="22" width="30" height="2" fill="#6faee2" />
              </svg>
              <span className="ml-[9px] flex-1 whitespace-nowrap">Native Files</span>
              <Stepper />
            </div>
            <div className={`ml-[17px] flex h-[41px] w-[40px] items-center justify-center rounded-[9px] ${control}`}>
              <svg width="12" height="8" viewBox="0 0 12 8" fill="none" stroke="#262626" strokeWidth="2.2">
                <path d="M1 1l5 5.500L11 1" />
              </svg>
            </div>
          </div>
        </div>

        <div className="h-[202px] shrink-0 border-b-2 border-[#e6e6e6] pt-[39px]">
          <div className="flex h-[40px] items-center">
            <div className={`ml-[57px] flex h-[40px] w-[290px] items-center justify-center rounded-[9px] ${control}`}>
              <span className="whitespace-nowrap">Ubicaciones en línea</span>
            </div>
            <span className="ml-[32px] w-[248px] whitespace-nowrap">Formato del archivo:</span>
            <div className={`flex h-[40px] w-[736px] items-center justify-between rounded-[9px] pl-[16px] pr-[4px] ${control}`}>
              <span>Libro de Excel (.xlsx)</span>
              <Stepper />
            </div>
          </div>
          <div className={`ml-[627px] mt-[40px] flex h-[40px] w-[178px] items-center justify-center rounded-[9px] pb-[2px] ${control}`}>
            Opciones...
          </div>
        </div>

        <div className="flex justify-end gap-[17px] pr-[40px] pt-[38px]">
          <div className={`flex h-[41px] w-[163px] items-center justify-center rounded-[9px] ${control}`}>Cancelar</div>
          <div className="flex h-[41px] w-[163px] items-center justify-center rounded-[9px] bg-gradient-to-b from-[#4f8a62] to-[#33704a] font-medium text-white shadow-[0_1px_2px_rgba(0,0,0,0.3)]">Guardar</div>
        </div>
      </div>
    </div>
  );
}
